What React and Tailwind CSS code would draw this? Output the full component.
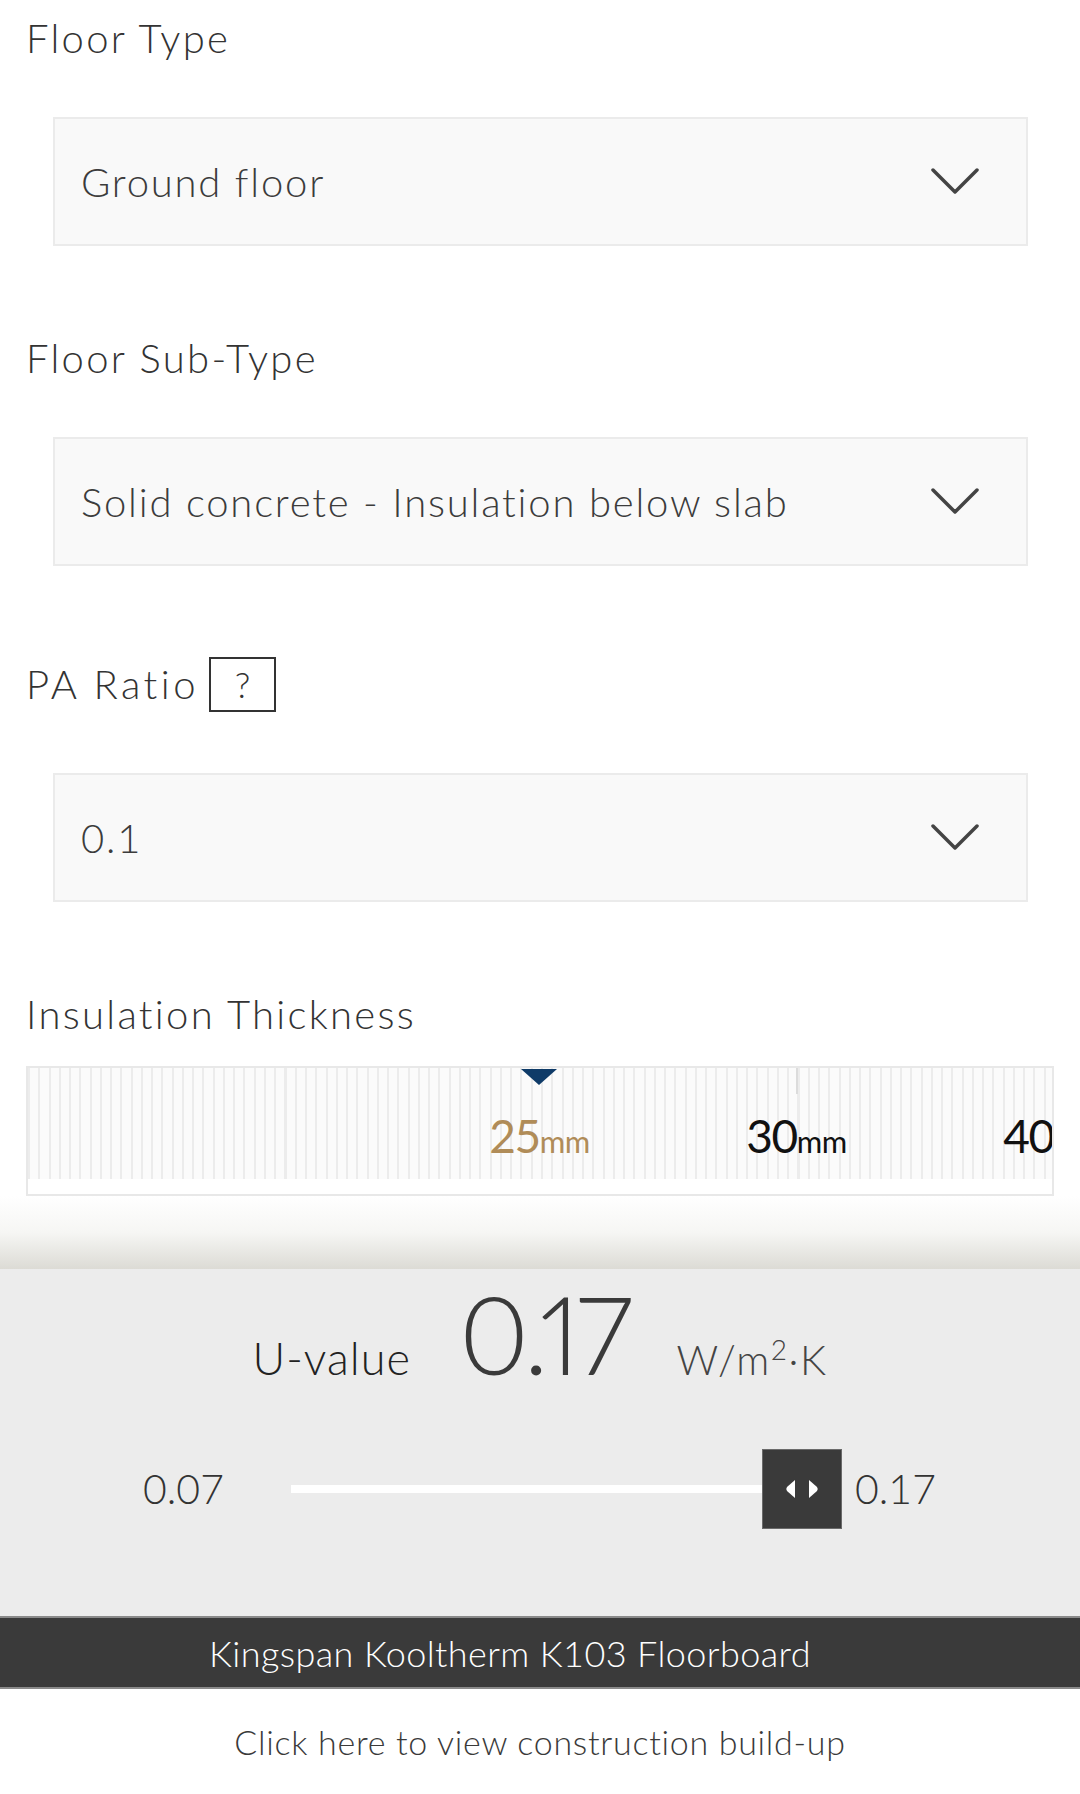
import React from "react";

function Chevron() {
  return (
    <svg width="48" height="27" viewBox="0 0 48 27" className="shrink-0">
      <polyline points="2,2 24,24 46,2" fill="none" stroke="#444" strokeWidth="3.5" strokeLinecap="round" strokeLinejoin="round" />
    </svg>
  );
}

function Select({ value }) {
  return (
    <div className="ml-[53px] w-[975px] h-[129px] bg-[#f9f9f9] border-2 border-[#ebebeb] flex items-center justify-between pl-[26px] pr-[47px]">
      <span className="text-[40px] text-[#3c3c3c] tracking-[1.8px]">{value}</span>
      <Chevron />
    </div>
  );
}

function Label({ children, className = "" }) {
  return (
    <div className={"pl-[26px] h-[44px] flex items-center text-[40px] text-[#333] " + className}>
      {children}
    </div>
  );
}

function Tick({ num, unit, color }) {
  return (
    <div className="w-[257px] shrink-0 flex justify-center items-baseline" style={{ color }}>
      <span className="text-[46px] font-normal tracking-[-1.5px] leading-none">{num}</span>
      <span className="text-[31px] font-normal leading-none tracking-[-0.5px]">{unit}</span>
    </div>
  );
}

export default function App() {
  return (
    <div className="w-[1080px] h-[1794px] bg-white overflow-hidden font-['Lato',sans-serif] font-light">
      <div className="pt-[16px]">
        <Label className="tracking-[2.3px]">Floor Type</Label>
        <div className="mt-[57px]">
          <Select value="Ground floor" />
        </div>
        <Label className="mt-[90px] tracking-[2.3px]">Floor Sub-Type</Label>
        <div className="mt-[57px]">
          <Select value="Solid concrete - Insulation below slab" />
        </div>
        <Label className="mt-[96px]">
          <span className="tracking-[3.5px]">PA Ratio</span>
          <span className="ml-[10px] w-[67px] h-[55px] border-2 border-[#333] flex items-center justify-center text-[36px]">?</span>
        </Label>
        <div className="mt-[67px]">
          <Select value="0.1" />
        </div>
        <Label className="mt-[90px] tracking-[2.3px]">Insulation Thickness</Label>

        {/* ruler */}
        <div className="mt-[30px] ml-[26px] w-[1028px] h-[130px] border-2 border-[#e8e8e8] bg-white relative overflow-hidden">
          <div className="h-[111px] bg-[repeating-linear-gradient(90deg,#ececec_0px,#ececec_2px,#fbfbfb_2px,#fbfbfb_10.26px)] flex items-center pl-[383px] pt-[24px]">
            <Tick num="25" unit="mm" color="#b08c58" />
            <Tick num="30" unit="mm" color="#111111" />
            <Tick num="40" unit="mm" color="#111111" />
          </div>
          <div className="absolute left-[768px] top-0 w-[2px] h-[26px] bg-[#dcdcdc]" />
          <svg className="absolute left-[493px] top-[1px]" width="36" height="16" viewBox="0 0 36 16">
            <polygon points="0,0 36,0 18,16" fill="#0f3b68" />
          </svg>
        </div>

        {/* shadow */}
        <div className="h-[73px] bg-gradient-to-b from-white via-[#f6f6f4] to-[#dcdbd5]" />

        {/* U-value panel */}
        <div className="h-[347px] bg-[#ececec] pt-[10px]">
          <div className="flex items-baseline justify-center">
            <span className="text-[45px] text-[#222] mr-[48px] tracking-[1px]">U-value</span>
            <span className="text-[108px] leading-none text-[#3a3a3a] tracking-[-4px] proportional-nums">0.17</span>
            <span className="text-[41px] text-[#444] ml-[48px] tracking-[1.5px]">
              W/m<sup className="text-[28px] relative -top-[15px]">2</sup>·K
            </span>
          </div>
          <div className="mt-[56px] h-[80px] flex items-center pl-[143px]">
            <span className="w-[148px] text-[41px] text-[#333]">0.07</span>
            <div className="w-[471px] h-[8px] bg-white" />
            <div className="w-[80px] h-[80px] bg-[#3a3a3a] border border-[#6a6a6a] flex items-center justify-center">
              <svg width="36" height="20" viewBox="0 0 36 20">
                <path d="M11 1 L11 19 L3 12 Q1.5 10 3 8 Z" fill="#fff" />
                <path d="M25 1 L25 19 L33 12 Q34.5 10 33 8 Z" fill="#fff" />
              </svg>
            </div>
            <span className="ml-[13px] text-[41px] text-[#333]">0.17</span>
          </div>
        </div>

        {/* product bar */}
        <div className="h-[73px] bg-[#3a3a3a] border-y-2 border-[#8a8a8a] flex items-center justify-center pr-[60px]">
          <span className="text-[36px] text-white tracking-[0.4px]">Kingspan Kooltherm K103 Floorboard</span>
        </div>

        <div className="h-[104px] flex items-center justify-center">
          <span className="text-[34px] text-[#3a3a3a] tracking-[0.7px]">Click here to view construction build-up</span>
        </div>
      </div>
    </div>
  );
}
